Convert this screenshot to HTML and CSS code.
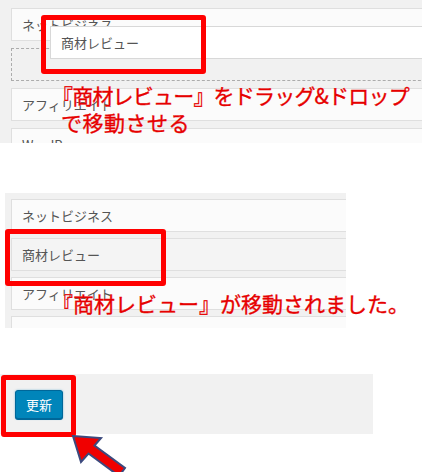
FILE: index.html
```html
<!DOCTYPE html>
<html lang="ja">
<head>
<meta charset="utf-8">
<title>メニューの並べ替え</title>
<link rel="stylesheet" href="styles.css">
</head>
<body>
<div class="page">
  <section class="fig fig-drag">
    <div class="panel panel-drag">
      <div class="item">ネットビジネス</div>
      <div class="placeholder"></div>
      <div class="item">アフィリエイト</div>
      <div class="item">WordPress</div>
    </div>
    <div class="item dragging">商材レビュー</div>
    <div class="mark mark-drag"></div>
    <p class="note note-drag"><span class="tight">『商材レビュー』をドラッグ&amp;ドロップ</span><br><span class="indent">で移動させる</span></p>
  </section>

  <section class="fig fig-moved">
    <div class="panel panel-moved">
      <div class="item">ネットビジネス</div>
      <div class="item item-moved">商材レビュー</div>
      <div class="item">アフィリエイト</div>
      <div class="item">WordPress</div>
    </div>
    <div class="mark mark-moved"></div>
    <p class="note note-moved">『商材レビュー』が移動されました。</p>
  </section>

  <section class="fig fig-save">
    <div class="panel panel-save">
      <button class="btn" type="button">更新</button>
    </div>
    <div class="mark mark-save"></div>
    <svg class="arrow" width="80" height="46" viewBox="0 0 80 46" aria-hidden="true">
      <polygon points="13,6 41,8 34.5,15.5 65,38 59,46 28.5,23.5 21,32" fill="#f00000" stroke="#3c4a7e" stroke-width="2" stroke-linejoin="miter"/>
    </svg>
  </section>
</div>
</body>
</html>
```
FILE: styles.css
```css
* { box-sizing: border-box; }

html, body {
  margin: 0;
  padding: 0;
  background: #fff;
}

body {
  width: 422px;
  height: 472px;
  overflow: hidden;
  font-family: "Noto Sans CJK JP", "Noto Sans", sans-serif;
}

.page {
  display: flex;
  flex-direction: column;
  width: 422px;
}

.fig {
  position: relative;
}

.panel {
  background: #f1f1f1;
  overflow: hidden;
  display: flex;
  flex-direction: column;
}

.item {
  flex: none;
  width: 440px;
  height: 33px;
  border: 1px solid #dfdfdf;
  background: #fbfbfb;
  color: #555;
  font-size: 13px;
  line-height: 31px;
  padding-left: 10px;
  white-space: nowrap;
}

.placeholder {
  flex: none;
  width: 440px;
  height: 33px;
  border: 1px dashed #acacac;
}

/* section 1 */
.panel-drag {
  width: 422px;
  height: 143px;
  padding: 8px 0 0 11px;
  gap: 7px;
}

.dragging {
  position: absolute;
  left: 50px;
  top: 26px;
  width: 380px;
  background: #fff;
  border-color: #d8d8d8;
}

.mark {
  position: absolute;
  border: 5px solid #f00;
  border-radius: 3px;
}

.mark-drag {
  left: 41px;
  top: 15px;
  width: 165px;
  height: 59px;
}

.note {
  position: absolute;
  margin: 0;
  color: #e60000;
  font-size: 21px;
  line-height: 27px;
  white-space: nowrap;
  -webkit-text-stroke: 0.35px #e60000;
  text-shadow: 0 0 1px #fff;
}

.note-drag {
  left: 52px;
  top: 82px;
}

.tight {
  letter-spacing: -0.8px;
}

.indent {
  padding-left: 9px;
  letter-spacing: 0.5px;
}

/* section 2 */
.fig-moved {
  margin-top: 50px;
  margin-left: 5px;
  width: 341px;
}

.panel-moved {
  width: 341px;
  height: 135px;
  padding: 6px 0 0 6px;
  gap: 6px;
}

.item-moved {
  background: #f4f4f4;
}

.mark-moved {
  left: 0;
  top: 36px;
  width: 161px;
  height: 57px;
}

.note-moved {
  left: 47px;
  top: 97px;
}

/* section 3 */
.fig-save {
  margin-top: 46px;
  width: 373px;
}

.panel-save {
  width: 373px;
  height: 60px;
  padding: 16px 0 0 15px;
  align-items: flex-start;
}

.btn {
  width: 48px;
  height: 29px;
  padding: 0;
  border: 1px solid #006799;
  border-radius: 3px;
  background: #0085ba;
  color: #fff;
  font-family: "Noto Sans CJK JP", "Noto Sans", sans-serif;
  font-size: 13px;
  line-height: 27px;
  box-shadow: 0 1px 0 #006799, 0 0 2px rgba(30, 140, 190, 0.6);
}

.mark-save {
  left: 1px;
  top: 1px;
  width: 75px;
  height: 62px;
}

.arrow {
  position: absolute;
  left: 60px;
  top: 56px;
  overflow: visible;
}
```
